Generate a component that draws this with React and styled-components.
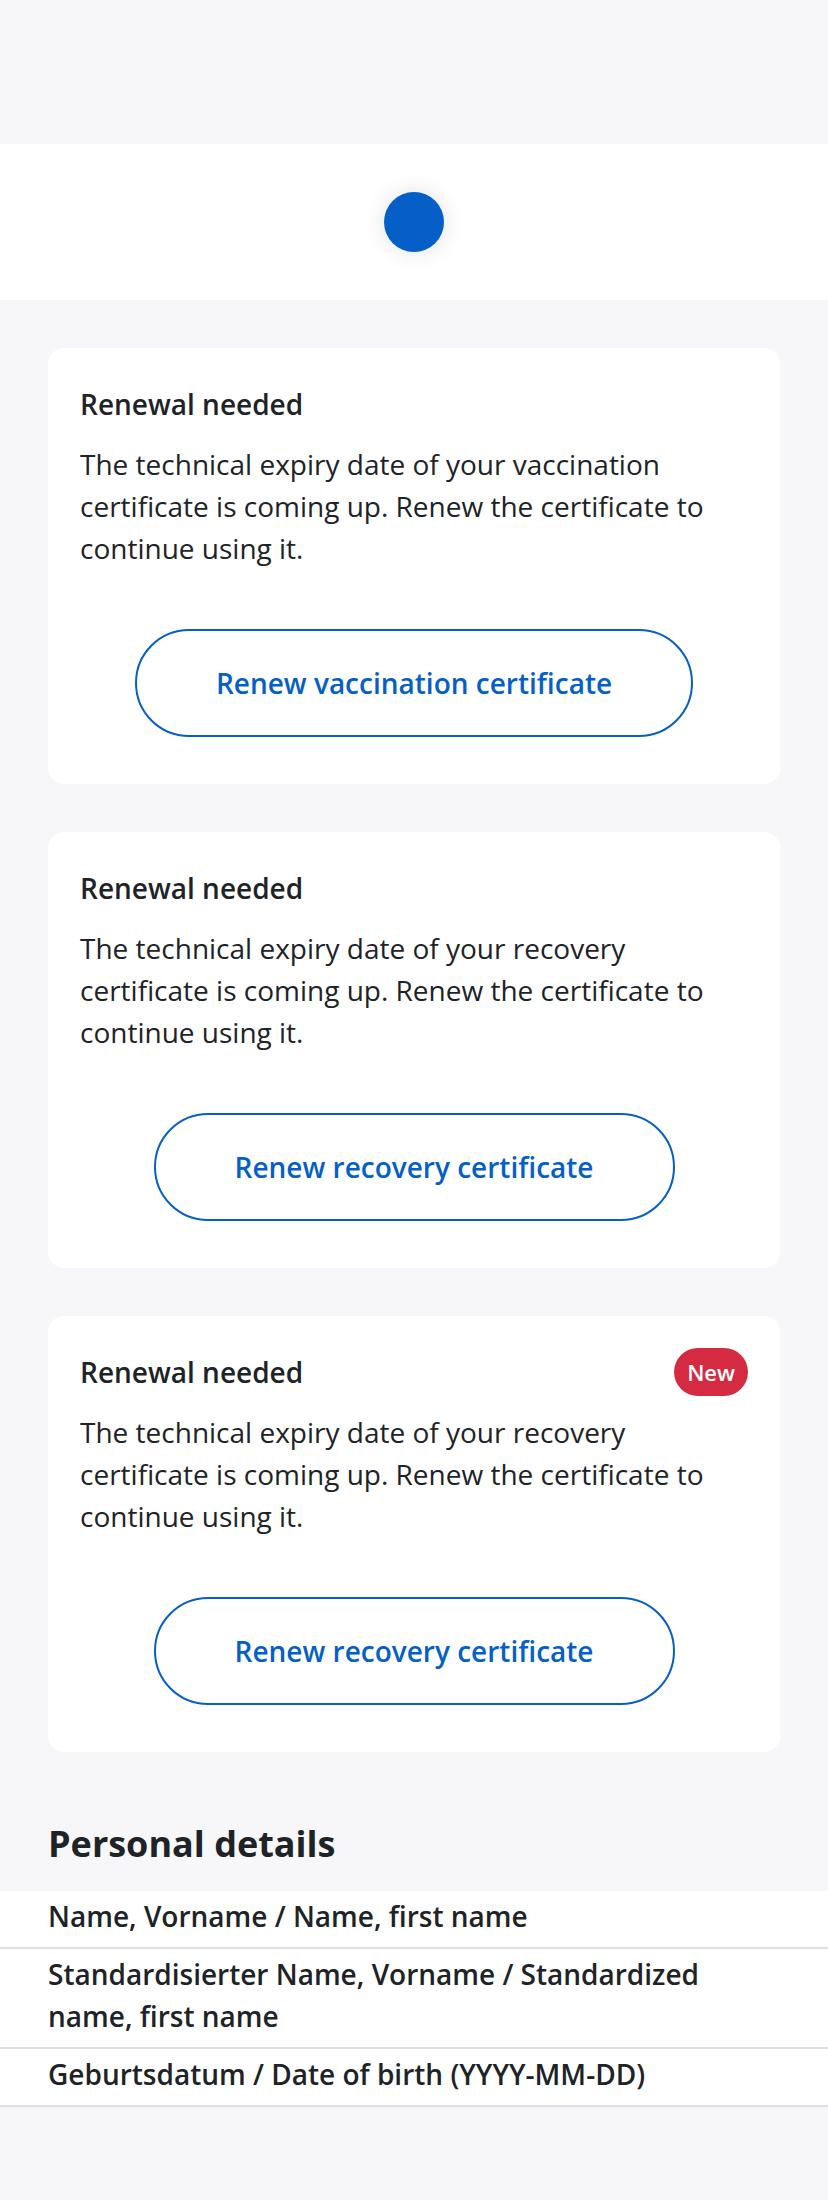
import styled, { createGlobalStyle } from "styled-components";

const GlobalStyle = createGlobalStyle`
  * { box-sizing: border-box; }
  body {
    margin: 0;
    background: #f7f7f9;
    font-family: "Open Sans", "Noto Sans", sans-serif;
    color: #1d2327;
  }
`;

const Page = styled.div`
  width: 828px;
  min-height: 2200px;
  background: #f7f7f9;
  padding-top: 144px;
`;

const Header = styled.div`
  height: 156px;
  background: #ffffff;
  display: flex;
  align-items: center;
  justify-content: center;
`;

const Dot = styled.div`
  width: 60px;
  height: 60px;
  border-radius: 50%;
  background: #065fc6;
  box-shadow: 0 0 22px rgba(0, 0, 0, 0.12);
`;

const Cards = styled.div`
  display: flex;
  flex-direction: column;
  gap: 48px;
  padding: 48px 48px 0;
`;

const Card = styled.div`
  background: #ffffff;
  border-radius: 16px;
  padding: 32px 32px 47px;
  display: flex;
  flex-direction: column;
`;

const TitleRow = styled.div`
  display: flex;
  align-items: center;
  justify-content: space-between;
  height: 48px;
`;

const Title = styled.h3`
  margin: 0;
  font-size: 28px;
  font-weight: 600;
  line-height: 48px;
`;

const Badge = styled.span`
  height: 48px;
  padding: 0 13px;
  border-radius: 24px;
  background: #d42b42;
  color: #ffffff;
  font-size: 22px;
  font-weight: 600;
  display: flex;
  align-items: center;
`;

const Body = styled.p`
  margin: 15px 0 0;
  font-size: 28px;
  line-height: 42px;
  font-weight: 400;
`;

const ButtonRow = styled.div`
  display: flex;
  justify-content: center;
  margin-top: 60px;
`;

const OutlineButton = styled.button`
  height: 108px;
  padding: 0 79px;
  border: 2px solid #065fc6;
  border-radius: 54px;
  background: #ffffff;
  color: #065fc6;
  font-family: "Open Sans", "Noto Sans", sans-serif;
  font-size: 28px;
  font-weight: 600;
`;

const Section = styled.section`
  padding-top: 68px;
`;

const SectionTitle = styled.h2`
  margin: 0 0 23px;
  padding: 0 48px;
  font-size: 36px;
  font-weight: 700;
  line-height: 48px;
`;

const List = styled.div`
  background: #ffffff;
`;

const Row = styled.div`
  padding: 4px 48px 10px;
  border-bottom: 2px solid #dedfe2;
  font-size: 28px;
  font-weight: 600;
  line-height: 42px;
`;

const certs = [
  { kind: "vaccination" },
  { kind: "recovery" },
  { kind: "recovery", isNew: true },
];

const fields = [
  "Name, Vorname / Name, first name",
  "Standardisierter Name, Vorname / Standardized name, first name",
  "Geburtsdatum / Date of birth (YYYY-MM-DD)",
];

const App = () => {
  return (
    <Page>
      <GlobalStyle />
      <Header>
        <Dot />
      </Header>
      <Cards>
        {certs.map((c, i) => (
          <Card key={i}>
            <TitleRow>
              <Title>Renewal needed</Title>
              {c.isNew && <Badge>New</Badge>}
            </TitleRow>
            <Body>
              The technical expiry date of your {c.kind} certificate is coming
              up. Renew the certificate to continue using it.
            </Body>
            <ButtonRow>
              <OutlineButton>Renew {c.kind} certificate</OutlineButton>
            </ButtonRow>
          </Card>
        ))}
      </Cards>
      <Section>
        <SectionTitle>Personal details</SectionTitle>
        <List>
          {fields.map((f) => (
            <Row key={f}>{f}</Row>
          ))}
        </List>
      </Section>
    </Page>
  );
};

export default App;
